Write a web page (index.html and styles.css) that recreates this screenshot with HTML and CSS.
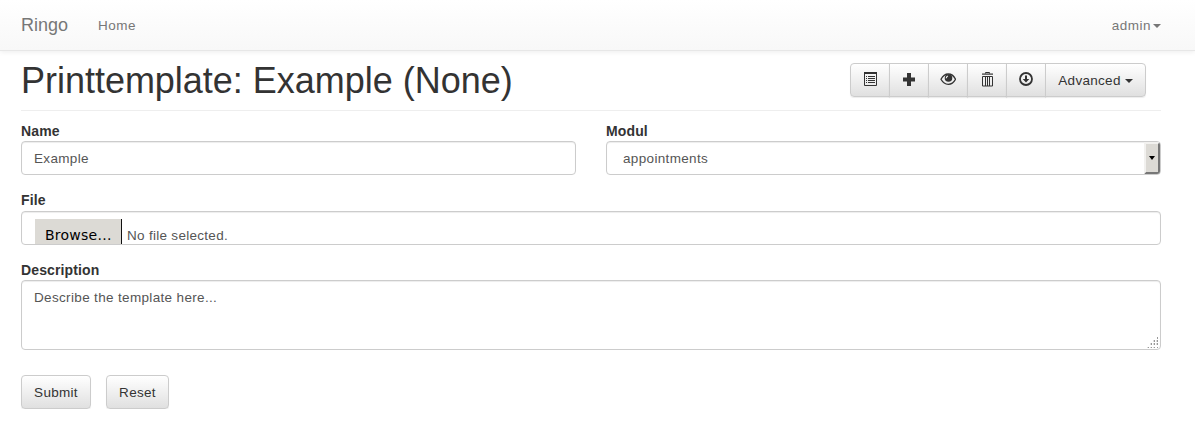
FILE: index.html
```html
<!DOCTYPE html>
<html lang="en">
<head>
<meta charset="utf-8">
<title>Ringo</title>
<link rel="stylesheet" href="styles.css">
</head>
<body>
<nav class="navbar">
  <a class="brand">Ringo</a>
  <a class="nav-link">Home</a>
  <a class="nav-link user">admin<span class="caret small"></span></a>
</nav>
<main class="container">
  <header class="page-header">
    <h1>Printtemplate: Example (None)</h1>
    <div class="btn-group">
      <button class="btn tool" aria-label="List"><svg width="14" height="14" viewBox="0 0 14 14"><path fill="none" stroke="#333" d="M1.500.5h12v13h-12z"/><path fill="#333" d="M1 0h13v2H1zM3 4h1v1H3zM5 4h7v1H5zM3 6h1v1H3zM5 6h7v1H5zM3 8h1v1H3zM5 8h7v1H5zM3 10h1v1H3zM5 10h7v1H5z"/></svg></button>
      <button class="btn tool" aria-label="Add"><svg width="14" height="14" viewBox="0 0 14 14"><path fill="#333" d="M5 1h4v4.500h4v4H9V14H5V9.500H1v-4h4z"/></svg></button>
      <button class="btn tool" aria-label="View"><svg width="16" height="14" viewBox="0 0 16 14"><path fill="none" stroke="#333" stroke-width="1.300" d="M1 7.300Q3.700 2 8.300 2t7.200 5.300Q12.800 12.300 8.300 12.300T1 7.300z"/><circle cx="8.500" cy="6" r="3.800" fill="#333"/><path fill="none" stroke="#eee" stroke-width="1.300" d="M6.300 6.300Q6.300 4.500 8 4"/></svg></button>
      <button class="btn tool" aria-label="Delete"><svg width="14" height="16" viewBox="0 0 14 16"><path fill="none" stroke="#333" d="M5.500 2.500v-1h4v1M2.500 5.500h10v9.500h-10zM5.500 6v9M7.500 6v9M9.500 6v9"/><path fill="#333" d="M2 2.500h11v1.200H2z"/></svg></button>
      <button class="btn tool" aria-label="Download"><svg width="14" height="14" viewBox="0 0 14 14"><circle cx="7" cy="7" r="6" fill="none" stroke="#333" stroke-width="1.800"/><path fill="#333" d="M6 3.500h2V7h2.300L7 10.500 3.700 7H6z"/></svg></button>
      <button class="btn">Advanced<span class="caret"></span></button>
    </div>
  </header>
  <form class="form">
    <div class="row">
      <div class="field"><label>Name</label><div class="control">Example</div></div>
      <div class="field"><label>Modul</label><div class="control select"><span>appointments</span><span class="drop"><span class="arrow"></span></span></div></div>
    </div>
    <div class="field file-field"><label>File</label><div class="control file"><span class="browse">Browse...</span><span class="filename">No file selected.</span></div></div>
    <div class="field"><label>Description</label><div class="control area"><span>Describe the template here...</span><svg class="grip" width="12" height="12" viewBox="0 0 12 12"><path fill="#999" d="M10 0h1v2h-1zM7 3h1v2H7zM10 3h1v2h-1zM4 6h1v2H4zM7 6h1v2H7zM10 6h1v2h-1zM1 10h1v1H1zM4 10h1v1H4zM7 10h1v1H7zM10 10h1v1h-1z"/><path fill="#ddd" d="M6 3h1v2H6zM9 3h1v2H9zM3 6h1v2H3zM6 6h1v2H6zM9 6h1v2H9zM0 10h1v1H0zM3 10h1v1H3zM6 10h1v1H6z"/></svg></div></div>
    <div class="actions"><button class="btn submit" type="button">Submit</button><button class="btn reset" type="button">Reset</button></div>
  </form>
</main>
</body>
</html>
```

FILE: styles.css
```css
* { box-sizing: border-box; }
body {
  margin: 0;
  background: #fff;
  color: #333;
  font: 13.5px/20px "Liberation Sans", Arial, sans-serif;
  letter-spacing: .34px;
}
.navbar {
  display: flex;
  align-items: center;
  height: 51px;
  padding: 0 34px 0 21px;
  background: linear-gradient(#fff, #f8f8f8);
  border-bottom: 1px solid #e7e7e7;
  box-shadow: 0 1px 5px rgba(0, 0, 0, .075);
  color: #777;
}
.brand { width: 77px; font-size: 18px; letter-spacing: 0; }
.nav-link { padding-top: 1px; letter-spacing: .5px; }
.user { margin-left: auto; }
.caret {
  display: inline-block;
  margin-left: 4px;
  border: 4px solid transparent;
  border-top-color: currentColor;
  border-bottom: 0;
  vertical-align: middle;
}
.caret.small { margin-left: 2px; border-width: 4px 4px 0; }
.container { padding: 0 34px 0 21px; }
.page-header {
  display: flex;
  justify-content: space-between;
  height: 60px;
  padding-right: 15px;
  border-bottom: 1px solid #eee;
}
h1 { margin: 10px 0 0; font-size: 36px; font-weight: 400; line-height: 40px; letter-spacing: -.02px; white-space: nowrap; }
.btn-group { display: flex; margin-top: 12px; height: 34px; }
.btn {
  height: 34px;
  padding: 1px 11px 0;
  border: 1px solid #ccc;
  border-radius: 4px;
  background: linear-gradient(#fff, #e0e0e0);
  box-shadow: inset 0 1px 0 rgba(255, 255, 255, .15), 0 1px 1px rgba(0, 0, 0, .075);
  color: #333;
  font: inherit;
  letter-spacing: .3px;
  white-space: nowrap;
}
.btn-group .btn { width: 101px; margin-left: -1px; border-radius: 0; }
.btn-group .btn:first-child { margin-left: 0; border-radius: 4px 0 0 4px; }
.btn-group .btn:last-child { border-radius: 0 4px 4px 0; }
.btn-group .tool { display: flex; align-items: center; justify-content: center; width: 40px; padding: 0 0 2px; }
.form { display: flex; flex-direction: column; gap: 15px; padding-top: 10px; }
.row { display: grid; grid-template-columns: 555px 555px; gap: 30px; }
.field { display: flex; flex-direction: column; }
label { height: 20px; font-size: 14px; font-weight: 700; letter-spacing: .12px; }
.file-field label { height: 21px; }
.control {
  height: 34px;
  padding: 7px 12px 5px;
  border: 1px solid #ccc;
  border-radius: 4px;
  box-shadow: inset 0 1px 1px rgba(0, 0, 0, .075);
  color: #555;
}
.select { display: flex; justify-content: space-between; padding: 0 0 0 16px; line-height: 33px; }
.drop {
  display: flex;
  align-items: center;
  justify-content: center;
  width: 16px;
  border: 2px solid;
  border-color: #f2f1ef #777 #777 #f2f1ef;
  border-radius: 0 3px 3px 0;
  background: #dcdad5;
}
.arrow { border: 3px solid transparent; border-top: 4px solid #000; border-bottom: 0; }
.file { display: flex; padding: 7px 13px 0; overflow: hidden; }
.browse {
  width: 87px;
  height: 25px;
  padding: 6px 0 0 10px;
  border-right: 1px solid #111;
  background: #dcdad5;
  color: #000;
  font: 14px/20px "DejaVu Sans", sans-serif;
  letter-spacing: .25px;
}
.filename { padding: 7px 0 0 5px; letter-spacing: .29px; }
.area { position: relative; height: 70px; }
.grip { position: absolute; right: 1px; bottom: 0; }
.actions { display: flex; gap: 15px; padding-top: 10px; }
.submit { width: 70px; }
.reset { width: 63px; }
```
